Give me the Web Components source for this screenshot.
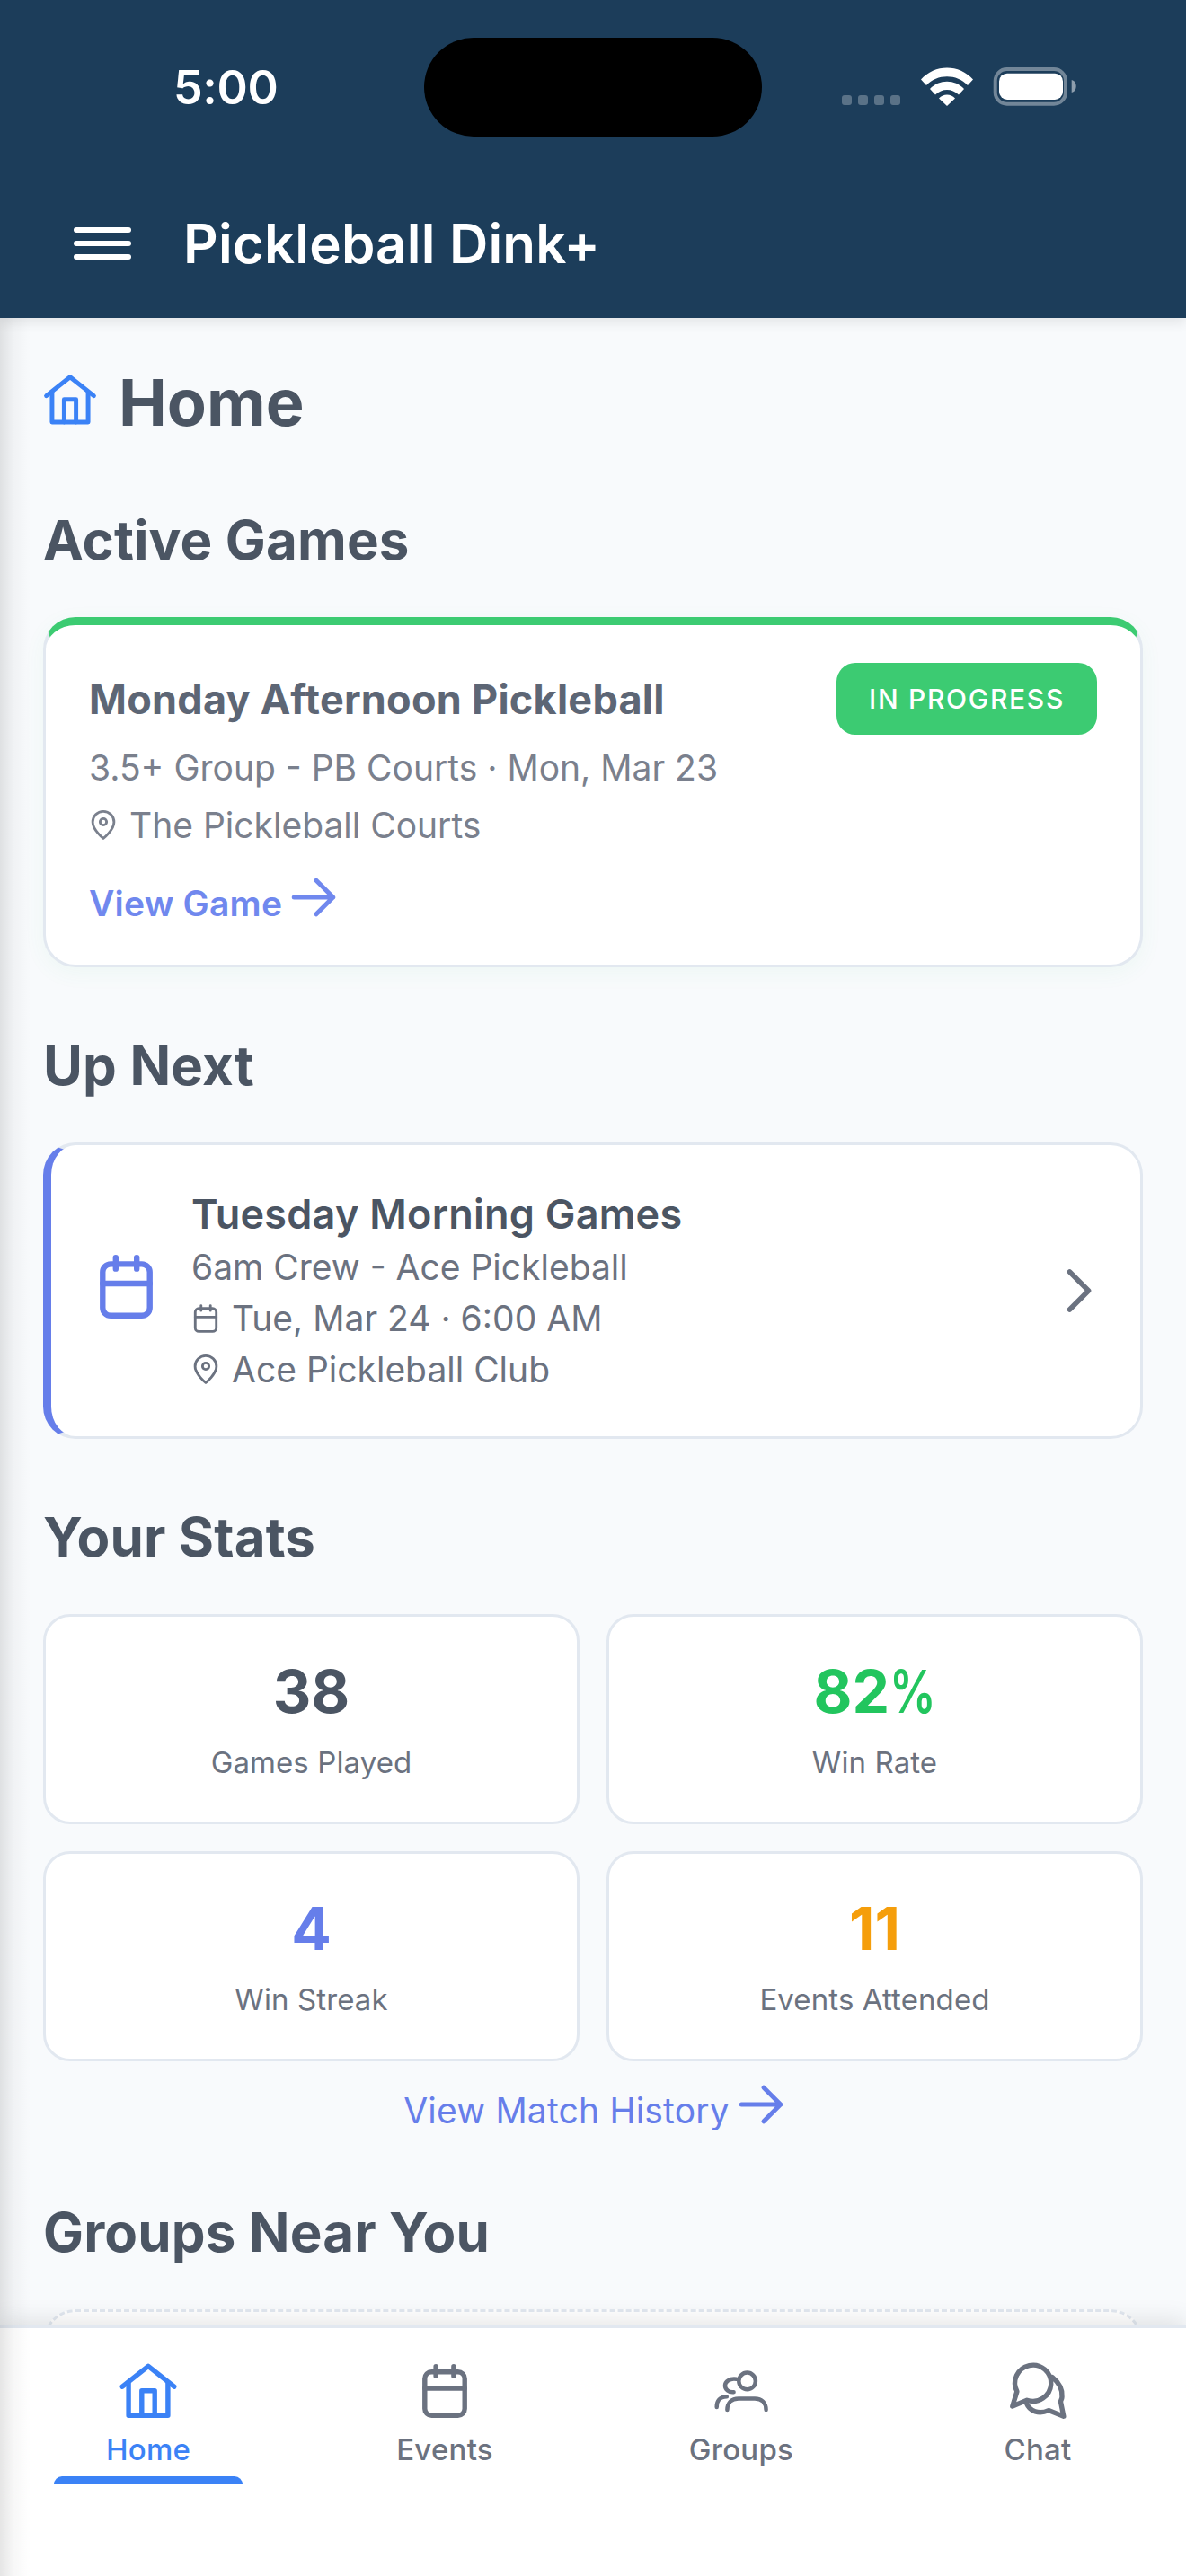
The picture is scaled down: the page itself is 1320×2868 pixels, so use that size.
<!DOCTYPE html>
<html><head><meta charset="utf-8"><style>
html,body{margin:0;padding:0;background:#f8fafc}
body{font-family:Inter,"Liberation Sans",sans-serif;width:1320px;height:2868px;overflow:hidden}
</style></head><body>
<app-shell>
<app-header slot="header"></app-header>
<section-title main><ui-icon name="home" size="66" color="#3b82f6" style="margin:-6px 0 0 -3px"></ui-icon>Home</section-title>
<section-title>Active Games</section-title>
<active-card></active-card>
<section-title>Up Next</section-title>
<next-card></next-card>
<section-title>Your Stats</section-title>
<stats-grid>
<stat-card value="38" label="Games Played" color="#4b5563"></stat-card>
<stat-card value="82" suffix="%" label="Win Rate" color="#22c55e"></stat-card>
<stat-card value="4" label="Win Streak" color="#667eea"></stat-card>
<stat-card value="11" label="Events Attended" color="#f59e0b"></stat-card>
</stats-grid>
<history-link></history-link>
<section-title>Groups Near You</section-title>
<dashed-card></dashed-card>
<tab-bar slot="tabs"></tab-bar>
</app-shell>
<script>
const ICONS={
home:'<path d="M2.400 10.400 12 2.800 21.600 10.400"/><path d="M4.700 8.800V21.100H19.300V8.800"/><path d="M9.600 21.100V11.900H14.400V21.100"/>',
cal:'<rect x="4.600" y="4.900" width="14.800" height="16.200" rx="2.500"/><path d="M8.700 2.900v3.500M15.300 2.900v3.500M4.600 11h14.800"/>',
pin:'<path d="M12 21.100s-7.500-6-7.500-11.500a7.500 7.500 0 0 1 15 0C19.500 15.100 12 21.100 12 21.100z"/><circle cx="12" cy="9.500" r="2.300"/>',
arrow:'<path d="M3.300 12H20.700M13.200 4.500 20.700 12 13.200 19.500"/>',
chev:'<path d="M8.500 5 15.500 12 8.500 19"/>',
groups:'<circle cx="14.200" cy="8.300" r="3.100"/><path d="M10.200 7.600C7.600 7.200 6 8.700 6 10c0 1.500 1.400 2.600 3.200 2.400"/><path d="M6.800 19c0-2.600 1.600-4.200 4.200-4.200h6c2.600 0 4.200 1.600 4.200 4.200"/><path d="M2.900 18c0-2.500 1-3.700 3.700-3.900"/>',
chat:'<path d="M4.300 12.200 2.600 17.700 8 15.400A6.700 6.700 0 1 0 4.300 12.200Z"/><path d="M17.400 6.900C20 9 21.200 11.500 21 14.200 21 15 20.500 15.500 20.500 16L21.600 21.400 16 19.200C12.500 20.800 9 19.600 7.800 16.500"/>'
};
class UiIcon extends HTMLElement{connectedCallback(){
const s=this.getAttribute('size')||48,c=this.getAttribute('color')||'currentColor',w=this.getAttribute('sw')||1.8;
const sr=this.shadowRoot||this.attachShadow({mode:'open'});
sr.innerHTML=`<style>:host{display:inline-flex;flex:none;line-height:0}svg{display:block;overflow:visible}</style><svg width="${s}" height="${s}" viewBox="0 0 24 24" fill="none" stroke="${c}" stroke-width="${w}" stroke-linecap="round" stroke-linejoin="round">${ICONS[this.getAttribute('name')]}</svg>`;
}}
customElements.define('ui-icon',UiIcon);
function def(name,html){customElements.define(name,class extends HTMLElement{constructor(){super();const r=this.attachShadow({mode:'open'});if(typeof html!=='function')r.innerHTML=html;}connectedCallback(){if(typeof html==='function')this.shadowRoot.innerHTML=html(this);}});}
def('app-shell',`<style>:host{display:flex;flex-direction:column;width:1320px;height:2868px;position:relative;overflow:hidden}
main{flex:1;min-height:0;overflow:hidden;padding:0 48px;display:flex;flex-direction:column;position:relative;background:#f8fafc}
.edge{position:absolute;left:0;top:354px;bottom:0;width:34px;background:linear-gradient(90deg,rgba(0,0,0,.1),rgba(0,0,0,.03) 45%,rgba(0,0,0,0));pointer-events:none;z-index:5}
</style><slot name="header"></slot><main><slot></slot></main><slot name="tabs"></slot><div class="edge"></div>`);
def('app-header',`<style>:host{display:block;height:354px;background:#1c3d5a;position:relative;z-index:3;box-shadow:0 6px 12px rgba(0,0,0,.08);color:#fff;flex:none}
.status{height:164px;position:relative}
.time{position:absolute;left:193px;top:70px;font:600 52px/56px Inter,sans-serif;letter-spacing:-.4px}
.island{position:absolute;left:472px;top:42px;width:376px;height:110px;border-radius:55px;background:#000}
.right{position:absolute;left:934px;top:74px}
.bar{display:flex;align-items:center;height:190px;padding-left:82px;gap:58px;box-sizing:border-box;padding-top:24px}
.burger{width:64px;display:flex;flex-direction:column;gap:9px}.burger i{display:block;height:6px;background:#fff;border-radius:3px}
h1{margin:0;font:600 60px/68px Inter,sans-serif;letter-spacing:.2px}
</style><div class="status"><div class="time">5:00</div><div class="island"></div>
<svg class="right" width="270" height="46" viewBox="0 0 270 46"><g fill="#fff" opacity=".27"><rect x="3" y="32" width="11" height="11" rx="3"/><rect x="21" y="32" width="11" height="11" rx="3"/><rect x="39" y="32" width="11" height="11" rx="3"/><rect x="57" y="32" width="11" height="11" rx="3"/></g>
<g fill="#fff"><path d="M91 14.500C106 -3 134 -3 149 14.500L143 21C131 8 109 8 97 21Z"/><path d="M101 25C111 14 129 14 139 25L133 31.500C126 24 114 24 107 31.500Z"/><path d="M111 35.500C116 30 124 30 129 35.500L120 44Z"/></g>
<rect x="173.700" y="3" width="78.300" height="38.700" rx="13" fill="none" stroke="#fff" stroke-opacity=".38" stroke-width="4"/><rect x="178" y="7.700" width="71" height="29.300" rx="9" fill="#fff"/><path d="M258.700 15c3.500 1 5 4 5 7s-1.500 6-5 7z" fill="#fff" fill-opacity=".5"/></svg></div>
<div class="bar"><div class="burger"><i></i><i></i><i></i></div><h1>Pickleball Dink+</h1></div>`);
def('section-title',`<style>:host{display:flex;align-items:center;flex:none;color:#4b5563;font:700 60px/72px Inter,sans-serif;letter-spacing:.15px}
:host([main]){font-size:72px;line-height:84px;padding-top:52px;gap:21px;margin-bottom:75px;letter-spacing:0}</style><slot></slot>`);
def('active-card',`<style>:host{display:block;flex:none;box-sizing:border-box;height:390px;margin-top:50px;margin-bottom:73px;background:#fff;border:3px solid #e2e8f0;border-top:9px solid #3ccb72;border-radius:36px;padding:42px 48px 0;box-shadow:0 6px 24px rgba(60,203,114,.06)}
.top{display:flex;justify-content:space-between;align-items:flex-start}
h3{margin:14px 0 0;font:700 45px/54px Inter,sans-serif;color:#5d6675;letter-spacing:.25px}
.badge{background:#3ccb72;color:#fff;font:500 30px/80px Inter,sans-serif;height:80px;border-radius:21px;padding:0 36px;letter-spacing:1.700px}
.l{font:400 39px/48px Inter,sans-serif;color:#7a808d}.sub{margin-top:13px}.row{display:flex;align-items:center;gap:10px;margin-top:16px}
.row ui-icon{margin-left:-3px}
.go{display:flex;align-items:center;gap:5px;height:48px;margin-top:39px;color:#7088ee;font:600 39px/48px Inter,sans-serif;letter-spacing:.2px}
.go ui-icon{margin-top:-14px}
</style><div class="top"><h3>Monday Afternoon Pickleball</h3><div class="badge">IN PROGRESS</div></div>
<div class="l sub">3.5+ Group - PB Courts · Mon, Mar 23</div>
<div class="l row"><ui-icon name="pin" size="38" color="#7a808d"></ui-icon>The Pickleball Courts</div>
<div class="go">View Game<ui-icon name="arrow" size="60" color="#7088ee" sw="2"></ui-icon></div>`);
def('next-card',`<style>:host{display:flex;align-items:center;flex:none;box-sizing:border-box;height:330px;margin-top:50px;margin-bottom:73px;background:#fff;border:3px solid #e2e8f0;border-left:9px solid #667eea;border-radius:36px;padding:0 32px 0 41px;gap:30px}
.cal{margin-top:-10px}
.b{flex:1;min-width:0;padding-top:2px}
h3{margin:-1.500px 0 .5px;font:600 45px/60px Inter,sans-serif;color:#4b5563;letter-spacing:.25px}
.l{font:400 39px/57px Inter,sans-serif;color:#6b7280;display:flex;align-items:center;gap:10px}
.l ui-icon{margin-left:-3px}
.chev{margin-left:-30px}
</style><ui-icon class="cal" name="cal" size="85" color="#667eea"></ui-icon>
<div class="b"><h3>Tuesday Morning Games</h3><div class="l">6am Crew - Ace Pickleball</div>
<div class="l"><ui-icon name="cal" size="38" color="#6b7280"></ui-icon>Tue, Mar 24 · 6:00 AM</div>
<div class="l"><ui-icon name="pin" size="38" color="#6b7280"></ui-icon>Ace Pickleball Club</div></div>
<ui-icon class="chev" name="chev" size="72" color="#6b7280" sw="1.900"></ui-icon>`);
def('stats-grid',`<style>:host{display:grid;flex:none;grid-template-columns:1fr 1fr;gap:30px;margin-top:50px}</style><slot></slot>`);
def('stat-card',h=>`<style>:host{display:flex;flex-direction:column;align-items:center;box-sizing:border-box;height:234px;background:#fff;border:3px solid #e2e8f0;border-radius:30px;padding-top:44px}
b{font:700 66px/78px Inter,sans-serif;color:${h.getAttribute('color')}}
b small{display:inline-block;font-size:66px;font-weight:600;line-height:0;transform:scaleX(.78);transform-origin:left center;margin-right:-15px}
span{font:400 33px/40px Inter,sans-serif;color:#6b7280;margin-top:20px;letter-spacing:.1px}</style><b>${h.getAttribute('value')}${h.hasAttribute('suffix')?`<small>${h.getAttribute('suffix')}</small>`:''}</b><span>${h.getAttribute('label')}</span>`);
def('history-link',`<style>:host{display:flex;justify-content:center;align-items:center;gap:5px;flex:none;height:48px;margin-top:31px;margin-bottom:75px;padding-left:6px;color:#667eea;font:400 39px/48px Inter,sans-serif;letter-spacing:.2px}
ui-icon{margin-top:-14px}</style>View Match History<ui-icon name="arrow" size="60" color="#667eea" sw="2"></ui-icon>`);
def('dashed-card',`<style>:host{display:block;flex:none;height:300px;margin-top:50px;border:3px dashed #e2e8f0;border-radius:36px;background:#fff}</style>`);
def('tab-item',h=>`<style>:host{flex:1;display:flex;flex-direction:column;align-items:center;position:relative;padding-top:34px;color:${h.hasAttribute('active')?'#3b82f6':'#6b7280'};font:500 33px/40px Inter,sans-serif;letter-spacing:.25px}
span{margin-top:9px}
i{position:absolute;left:60px;right:60px;top:165px;height:9px;border-radius:9px 9px 0 0;background:#3b82f6;display:${h.hasAttribute('active')?'block':'none'}}</style><ui-icon name="${h.getAttribute('icon')}" size="72" sw="${h.getAttribute('icon')==='groups'?1.5:1.8}"></ui-icon><span>${h.getAttribute('label')}</span><i></i>`);
def('tab-bar',`<style>:host{display:flex;flex:none;height:279px;box-sizing:border-box;border-top:3px solid #e2e8f0;background:#fff;position:relative;z-index:3;box-shadow:0 -6px 24px rgba(0,0,0,.1)}</style>
<tab-item icon="home" label="Home" active></tab-item><tab-item icon="cal" label="Events"></tab-item><tab-item icon="groups" label="Groups"></tab-item><tab-item icon="chat" label="Chat"></tab-item>`);
</script>
</body></html>
